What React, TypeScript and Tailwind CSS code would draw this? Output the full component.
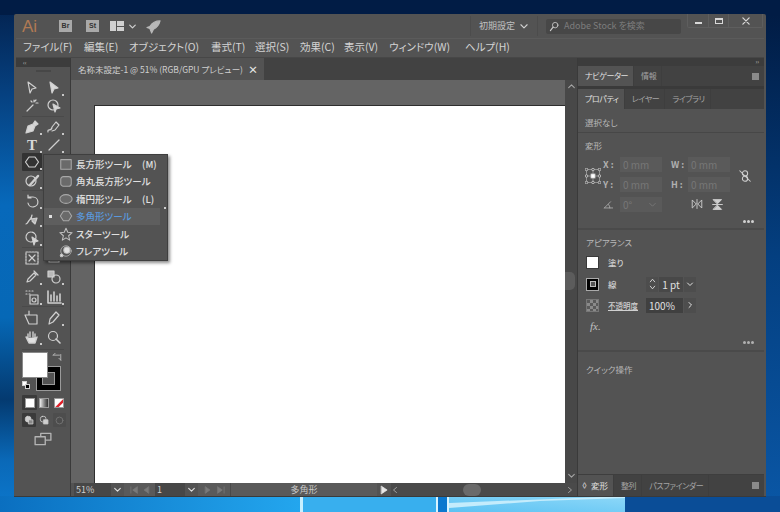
import type { ReactNode } from "react";

const menus = [
  ["ファイル(F)", "w-[61px]"],
  ["編集(E)", "w-[45px]"],
  ["オブジェクト(O)", "w-[82px]"],
  ["書式(T)", "w-[44px]"],
  ["選択(S)", "w-[45px]"],
  ["効果(C)", "w-[44px]"],
  ["表示(V)", "w-[45px]"],
  ["ウィンドウ(W)", "w-[76px]"],
  ["ヘルプ(H)", "w-[60px]"],
] as const;

function Ic({ children, size = 16, stroke = "#cfcfcf" }: { children: ReactNode; size?: number; stroke?: string }) {
  return (
    <svg width={size} height={size} viewBox="0 0 16 16" fill="none" stroke={stroke} strokeWidth="1.2" strokeLinejoin="round" strokeLinecap="round">
      {children}
    </svg>
  );
}

function Wallpaper() {
  return (
    <svg className="absolute inset-0" width="780" height="512" viewBox="0 0 780 512" preserveAspectRatio="none">
      <defs>
        <linearGradient id="left" x1="0" y1="0" x2="0" y2="1">
          <stop offset="0" stopColor="#03214d" />
          <stop offset="0.18" stopColor="#06407f" />
          <stop offset="0.4" stopColor="#0769bb" />
          <stop offset="0.62" stopColor="#0668b6" />
          <stop offset="0.78" stopColor="#043a70" />
          <stop offset="0.9" stopColor="#0a69b8" />
          <stop offset="1" stopColor="#0c78cd" />
        </linearGradient>
        <linearGradient id="right" x1="0" y1="0" x2="0" y2="1">
          <stop offset="0" stopColor="#011a41" />
          <stop offset="0.5" stopColor="#043f80" />
          <stop offset="1" stopColor="#0a57a6" />
        </linearGradient>
        <linearGradient id="bottom" x1="0" y1="0" x2="1" y2="0">
          <stop offset="0" stopColor="#0a6fc0" />
          <stop offset="1" stopColor="#23a6ee" />
        </linearGradient>
        <linearGradient id="pane" x1="0" y1="1" x2="1" y2="0">
          <stop offset="0" stopColor="#5cc2f3" />
          <stop offset="1" stopColor="#8ed8f8" />
        </linearGradient>
      </defs>
      <rect width="16" height="512" fill="url(#left)" />
      <rect x="764" width="16" height="512" fill="url(#right)" />
      <rect width="780" height="15" fill="#011c45" />
      <rect y="496" width="300" height="16" fill="url(#bottom)" />
      <rect x="300" y="496" width="137" height="16" fill="#38afee" />
      <rect x="438" y="496" width="10" height="16" fill="#0b78cf" />
      <rect x="449" y="496" width="176" height="16" fill="url(#pane)" />
      <rect x="625" y="496" width="155" height="16" fill="#0a4d97" />
      <rect x="300" y="496" width="3" height="16" fill="#c8f0ff" />
      <rect x="436" y="496" width="2" height="16" fill="#d8f4ff" />
      <rect x="447" y="496" width="2" height="16" fill="#d8f4ff" />
      <path d="M449 508 L540 501 L625 498 L625 496 L449 503 Z" fill="#c4ecfc" />
    </svg>
  );
}

function Tool({ children, active, corner = true }: { children: ReactNode; active?: boolean; corner?: boolean }) {
  return (
    <div className={`relative flex h-[18px] w-[20px] items-center justify-center rounded-[1px] ${active ? "bg-[#333333]" : ""}`}>
      {children}
      {corner && <span className="absolute right-[0px] bottom-[1px] h-[2px] w-[2px] bg-[#c8c8c8]" />}
    </div>
  );
}

function ToolRow({ children, className = "" }: { children: ReactNode; className?: string }) {
  return <div className={`flex justify-center gap-[2px] ${className}`}>{children}</div>;
}

function ToolSep() {
  return <div className="mx-[6px] h-px bg-[#4a4a4a]" />;
}

function ToolPanel() {
  return (
    <div className="flex w-[54px] shrink-0 flex-col bg-[#535353]">
      <div className="flex h-[9px] items-center bg-[#3c3c3c] pl-[7px] text-[6px] leading-none text-[#bbbbbb]">‹‹</div>
      <div className="mx-auto mt-[3px] h-[2px] w-[15px] bg-[#474747]" />
      <div className="mt-[7px] flex flex-col">
        <ToolRow>
          <Tool corner={false}><Ic><path d="M4 2 L12 8 L8 9 L6 13 Z" /></Ic></Tool>
          <Tool><Ic><path d="M4 2 L12 8 L8 9 L6 13 Z" fill="#d8d8d8" /></Ic></Tool>
        </ToolRow>
        <ToolRow className="mb-[1px]">
          <Tool corner={false}><Ic><path d="M3 13 L9 7 M10 2 V4 M12 5 H14 M7 3 L8 4 M12 2 L11 3" /></Ic></Tool>
          <Tool corner={false}><Ic><circle cx="7" cy="7" r="5" /><path d="M7 6 L14 10 L10 11 L9 14 Z" fill="#d8d8d8" /></Ic></Tool>
        </ToolRow>
        <ToolSep />
        <ToolRow className="mt-[1px]">
          <Tool><Ic><path d="M2 14 L4 7 L9 5 L11 7 L9 12 Z M9 5 L11 2 L14 5 L11 7" fill="#d8d8d8" /></Ic></Tool>
          <Tool><Ic><path d="M2 13 C1 9 6 13 6 8 L10 3 L13 6 L9 11 L6 12" /></Ic></Tool>
        </ToolRow>
        <ToolRow className="-mb-[1px]">
          <Tool><span className="font-['Liberation_Serif',serif] text-[15px] leading-none font-bold text-[#d8d8d8]">T</span></Tool>
          <Tool><Ic><path d="M3 13 L13 3" /></Ic></Tool>
        </ToolRow>
        <ToolRow className="mb-[1px]">
          <Tool active><Ic><path d="M5 3 H11 L14.5 8 L11 13 H5 L1.5 8 Z" /></Ic></Tool>
          <Tool><span /></Tool>
        </ToolRow>
        <ToolRow>
          <Tool><Ic><circle cx="7" cy="8" r="5" /><path d="M6 12 L14 3" strokeWidth="2.4" /></Ic></Tool>
          <Tool corner={false}><span /></Tool>
        </ToolRow>
        <ToolSep />
        <ToolRow className="mt-[1px]">
          <Tool><Ic><path d="M4 4 H9 A5 5 0 1 1 4 10 M4 2 V5 H7" /></Ic></Tool>
          <Tool><span /></Tool>
        </ToolRow>
        <ToolRow>
          <Tool><Ic><path d="M2 13 C5 12 4 9 7 8 L8 4 M7 8 L13 7 L11 13 L8 10" fill="#b8b8b8" /></Ic></Tool>
          <Tool><span /></Tool>
        </ToolRow>
        <ToolRow className="mt-[1px]">
          <Tool><Ic><circle cx="7" cy="7" r="5" strokeDasharray="3 1" /><path d="M8 7 L14 11 L11 12 L10 15 Z" fill="#d8d8d8" /></Ic></Tool>
          <Tool><span /></Tool>
        </ToolRow>
        <ToolSep />
        <ToolRow className="mt-[1px]">
          <Tool corner={false}><Ic><rect x="2" y="2" width="12" height="12" strokeDasharray="2 1" /><path d="M5 5 L8 8 L5 11 M11 5 L8 8 L11 11" /></Ic></Tool>
          <Tool corner={false}><Ic><rect x="3" y="4" width="10" height="8" /></Ic></Tool>
        </ToolRow>
        <ToolRow className="mt-[1px]">
          <Tool><Ic><path d="M3 13 L4 10 L10 4 L12 6 L6 12 Z M10 2 L14 6" /></Ic></Tool>
          <Tool><Ic><rect x="2" y="2" width="6" height="6" fill="#b8b8b8" /><circle cx="10" cy="10" r="4" /></Ic></Tool>
        </ToolRow>
        <ToolRow className="mt-[2px]">
          <Tool><Ic><path d="M2 2 H3 M5 2 H6 M2 5 H3 M8 2 H9 M5 5 H6" /><rect x="6" y="6" width="8" height="9" /><circle cx="10" cy="11" r="2" /></Ic></Tool>
          <Tool><Ic><path d="M2 2 V14 H15 M5 12 V6 M8 12 V3 M11 12 V7 M14 12 V5" strokeWidth="1.6" /></Ic></Tool>
        </ToolRow>
        <ToolSep />
        <ToolRow className="mt-[2px]">
          <Tool corner={false}><Ic><path d="M5 1 V5 M1 5 H13 V14 H5 Z" /></Ic></Tool>
          <Tool><Ic><path d="M3 14 L4 9 L10 2 L13 5 L7 12 Z" /></Ic></Tool>
        </ToolRow>
        <ToolRow className="mt-[1px]">
          <Tool><Ic><path d="M4 9 V5 M6 8 V3 M9 8 V3 M11 9 V5 M4 9 L2 8 L5 14 H11 L13 8" fill="#e0e0e0" strokeWidth="1.4" /></Ic></Tool>
          <Tool corner={false}><Ic><circle cx="7" cy="7" r="4.5" /><path d="M10 10 L14 14" strokeWidth="1.6" /></Ic></Tool>
        </ToolRow>
      </div>
      <div className="relative mx-[6px] mt-[3px] h-[46px] border-t border-[#4a4a4a]">
        <div className="absolute top-[16px] left-[14px] flex h-[25px] w-[25px] items-center justify-center border border-[#9a9a9a] bg-black">
          <div className="h-[13px] w-[13px] border border-[#9a9a9a] bg-[#535353]" />
        </div>
        <div className="absolute top-[2px] left-0 h-[26px] w-[26px] border border-[#8a8a8a] bg-white" />
        <div className="absolute top-[2px] left-[30px]">
          <Ic size={10}><path d="M2 5 L5 2 M2 5 H12 M14 13 V4 M14 13 L11 10" /></Ic>
        </div>
        <div className="absolute top-[31px] left-0 h-[5px] w-[5px] border border-[#cfcfcf] bg-white" />
        <div className="absolute top-[34px] left-[3px] h-[5px] w-[5px] border border-[#cfcfcf] bg-black" />
      </div>
      <div className="flex items-center pl-[6px]">
        <div className="flex h-[15px] w-[15px] items-center justify-center rounded-[1px] bg-[#3a3a3a]">
          <div className="h-[10px] w-[10px] border border-[#9a9a9a] bg-white" />
        </div>
        <div className="ml-[2px] h-[10px] w-[10px] border border-[#9a9a9a] bg-gradient-to-r from-[#eeeeee] to-[#333333]" />
        <div className="ml-[5px] h-[10px] w-[10px] overflow-hidden border border-[#9a9a9a] bg-white">
          <svg width="10" height="10" viewBox="0 0 10 10"><path d="M0 10 L10 0" stroke="#e0202a" strokeWidth="2.4" /></svg>
        </div>
      </div>
      <div className="mt-[3px] flex items-center gap-[2px] pl-[6px]">
        <div className="flex h-[14px] w-[14px] items-center justify-center rounded-[1px] bg-[#3a3a3a]"><Ic size={11}><rect x="2" y="2" width="8" height="8" rx="3" fill="#cfcfcf" /><rect x="7" y="7" width="6" height="6" fill="#888888" /></Ic></div>
        <div className="flex h-[14px] w-[13px] items-center justify-center"><Ic size={11}><rect x="2" y="2" width="8" height="8" rx="3" /><rect x="7" y="7" width="6" height="6" fill="#cfcfcf" /></Ic></div>
        <div className="flex h-[14px] w-[13px] items-center justify-center rounded-[1px] bg-[#4d4d4d]"><Ic size={11} stroke="#777777"><circle cx="8" cy="8" r="5" /></Ic></div>
      </div>
      <div className="mt-[3px] flex justify-center">
        <Ic size={18} stroke="#b4b4b4"><rect x="6" y="3" width="9" height="6" /><rect x="1" y="6" width="9" height="7" fill="#535353" /></Ic>
      </div>
    </div>
  );
}

function FlyoutRow({ icon, label, shortcut, active }: { icon: ReactNode; label: string; shortcut?: string; active?: boolean }) {
  return (
    <div className={`relative flex h-[17.5px] items-center pl-[13px] ${active ? "bg-[#5e5e5e] text-[#5a98dc]" : "text-[#e0e0e0]"}`}>
      {active && <span className="absolute left-[5px] h-[3px] w-[3px] bg-[#e0e0e0]" />}
      <span className="flex w-[18px] justify-center">{icon}</span>
      <span className="ml-[1px] w-[66px] font-medium whitespace-nowrap">{label}</span>
      {shortcut && <span className="font-medium whitespace-nowrap">{shortcut}</span>}
    </div>
  );
}

function Flyout() {
  return (
    <div className="absolute top-[96px] left-[27px] z-10 w-[125px] border border-[#3f3f3f] bg-[#535353] pr-[7px] text-[9.5px] shadow-[2px_2px_3px_rgba(0,0,0,0.45)]">
      <FlyoutRow label="長方形ツール" shortcut="(M)" icon={<Ic size={14} stroke="#a8a8a8"><rect x="2" y="3" width="12" height="11" fill="#6a6a6a" /></Ic>} />
      <FlyoutRow label="角丸長方形ツール" icon={<Ic size={14} stroke="#a8a8a8"><rect x="2" y="3" width="12" height="11" rx="3" fill="#6a6a6a" /></Ic>} />
      <FlyoutRow label="楕円形ツール" shortcut="(L)" icon={<Ic size={14} stroke="#a8a8a8"><ellipse cx="8" cy="8" rx="7" ry="5" fill="#6a6a6a" /></Ic>} />
      <FlyoutRow active label="多角形ツール" icon={<Ic size={14} stroke="#a8a8a8"><path d="M5 2.5 H11 L14.5 8 L11 13.5 H5 L1.5 8 Z" fill="#6a6a6a" /></Ic>} />
      <FlyoutRow label="スターツール" icon={<Ic size={14} stroke="#c0c0c0"><path d="M8 1.5 L10 6 L15 6.5 L11 10 L12.2 15 L8 12.4 L3.8 15 L5 10 L1 6.5 L6 6 Z" /></Ic>} />
      <FlyoutRow label="フレアツール" icon={<Ic size={14} stroke="#c0c0c0"><circle cx="9" cy="7" r="3.5" fill="#e0e0e0" /><circle cx="8" cy="8" r="6" strokeWidth="0.8" /><circle cx="3" cy="13" r="1.5" fill="#e0e0e0" /></Ic>} />
      <span className="absolute top-[52px] right-[1px] h-[2px] w-[2px] bg-[#cfcfcf]" />
    </div>
  );
}

function DocArea() {
  return (
    <div className="ml-px flex min-w-0 flex-1 flex-col">
      <div className="flex h-[22px] shrink-0 bg-[#424242]">
        <div className="flex w-[193px] items-center bg-[#535353] pl-[7px] text-[8.5px] whitespace-nowrap text-[#cfcfcf]">
          <span>名称未設定-1 @ 51% (RGB/GPU プレビュー)</span>
          <span className="ml-auto pr-[6px] text-[10px] font-bold text-[#e8e8e8]">×</span>
        </div>
      </div>
      <div className="flex min-h-0 flex-1">
        <div className="min-w-0 flex-1 bg-[#646464] pt-[25px] pl-[23px]">
          <div className="h-[378px] w-full border-t border-l border-[#2e2e2e] bg-white" />
        </div>
        <div className="relative flex w-[12px] shrink-0 flex-col items-center bg-[#484848] pt-[2px] text-[#9a9a9a]">
          <Ic size={9} stroke="#a8a8a8"><path d="M3 10 L8 5 L13 10" strokeWidth="1.8" /></Ic>
          <div className="mt-[181px] h-[18px] w-[10px] -translate-x-[1px] rounded-r-[5px] bg-[#5c5c5c]" />
          <div className="mt-auto mb-[3px]"><Ic size={9} stroke="#a8a8a8"><path d="M3 6 L8 11 L13 6" strokeWidth="1.8" /></Ic></div>
        </div>
      </div>
      <StatusBar />
    </div>
  );
}

function NavGlyph({ d }: { d: string }) {
  return <Ic size={10} stroke="#7a7a7a"><path d={d} fill="#7a7a7a" /></Ic>;
}

function StatusBar() {
  return (
    <div className="flex h-[13px] shrink-0 items-stretch bg-[#535353] text-[9px] leading-[13px] text-[#cfcfcf]">
      <div className="ml-[3px] w-[37px] bg-[#474747] pl-[2px]">51%</div>
      <div className="flex w-[13px] items-center justify-center"><Ic size={9} stroke="#e0e0e0"><path d="M3 6 L8 11 L13 6" strokeWidth="2" /></Ic></div>
      <div className="flex w-[31px] items-center justify-center gap-[2px] bg-[#5a5a5a]">
        <NavGlyph d="M3 3 V13 M13 3 L6 8 L13 13 Z" /><NavGlyph d="M12 3 L5 8 L12 13 Z" />
      </div>
      <div className="w-[30px] bg-[#474747] pl-[2px]">1</div>
      <div className="flex w-[13px] items-center justify-center"><Ic size={9} stroke="#e0e0e0"><path d="M3 6 L8 11 L13 6" strokeWidth="2" /></Ic></div>
      <div className="flex w-[32px] items-center justify-center gap-[3px] bg-[#5a5a5a]">
        <NavGlyph d="M4 3 L11 8 L4 13 Z" /><NavGlyph d="M13 3 V13 M3 3 L10 8 L3 13 Z" />
      </div>
      <div className="w-[147px] border-l border-[#4a4a4a] bg-[#5a5a5a] text-center text-[#c8c8c8]">多角形</div>
      <div className="flex w-[14px] items-center justify-center"><Ic size={10} stroke="#e8e8e8"><path d="M4 2 L13 8 L4 14 Z" fill="#e8e8e8" /></Ic></div>
      <div className="flex min-w-0 flex-1 items-center bg-[#4a4a4a]">
        <Ic size={8} stroke="#a8a8a8"><path d="M11 3 L5 8 L11 13" strokeWidth="1.8" /></Ic>
        <div className="ml-[64px] h-[12px] w-[18px] rounded-[6px] bg-[#6a6a6a]" />
        <div className="mr-[3px] ml-auto"><Ic size={8} stroke="#a8a8a8"><path d="M5 3 L11 8 L5 13" strokeWidth="1.8" /></Ic></div>
      </div>
    </div>
  );
}

function Tab({ label, active }: { label: string; active?: boolean }) {
  return (
    <div className={`flex h-full items-center border-r border-[#3e3e3e] pr-[5px] pl-[7px] text-[8px] tracking-[-0.4px] whitespace-nowrap ${active ? "bg-[#535353] text-[#e0e0e0]" : "text-[#a4a4a4]"}`}>
      {label}
    </div>
  );
}

function PanelMenu() {
  return <span className="mr-[5px] ml-auto h-[7px] w-[7px] bg-[#8a8a8a]" />;
}

function Field({ label, value, w = "w-[42px]" }: { label: ReactNode; value: string; w?: string }) {
  return (
    <div className="flex items-center">
      <span className="w-[17px] text-[9px] font-bold text-[#b0b0b0]">{label}</span>
      <span className={`flex h-[15px] ${w} items-center bg-[#5a5a5a] pl-[3px] text-[10px] text-[#777777]`}>{value}</span>
    </div>
  );
}

function RightPanel() {
  const refPoints = [1.5, 8, 14.5];
  return (
    <div className="ml-px flex w-[186px] shrink-0 flex-col">
      <div className="flex h-[8px] shrink-0 items-center justify-end bg-[#3c3c3c] pr-[5px] text-[6px] leading-none text-[#bbbbbb]">››</div>
      <div className="flex h-[20px] shrink-0 items-center bg-[#424242]">
        <Tab active label="ナビゲーター" />
        <Tab label="情報" />
        <PanelMenu />
      </div>
      <div className="h-[3px] shrink-0 bg-[#3a3a3a]" />
      <div className="flex h-[20px] shrink-0 items-center bg-[#424242]">
        <Tab active label="プロパティ" />
        <Tab label="レイヤー" />
        <Tab label="ライブラリ" />
      </div>
      <div className="min-h-0 flex-1 bg-[#535353] text-[8.5px] text-[#b8b8b8]">
        <div className="h-[24px] border-b border-[#474747] pt-[7px] pl-[7px]">選択なし</div>
        <div className="relative h-[97px] border-b-2 border-[#4a4a4a] pt-[6px] pl-[7px]">
          <div>変形</div>
          <div className="mt-[5px] flex">
            <div className="mt-[11px] mr-[2px] w-[16px]">
              <svg width="16" height="16" viewBox="0 0 16 16" fill="none" stroke="#cfcfcf" strokeWidth="0.8">
                <path d="M1.5 1.5 H14.5 V14.5 H1.5 Z M8 1.5 V14.5 M1.5 8 H14.5" strokeWidth="0.5" />
                {refPoints.map((y) =>
                  refPoints.map((x) => <circle key={`${x}-${y}`} cx={x} cy={y} r="1.3" fill="#535353" />)
                )}
                <rect x="6" y="6" width="4" height="4" fill="#ffffff" />
              </svg>
            </div>
            <div className="flex w-[128px] flex-col gap-[5px]">
              <div className="flex gap-[9px]"><Field label="X :" value="0 mm" /><Field label="W :" value="0 mm" /></div>
              <div className="flex gap-[9px]"><Field label="Y :" value="0 mm" /><Field label="H :" value="0 mm" /></div>
              <div className="flex items-center">
                <Field label={<Ic size={11} stroke="#b0b0b0"><path d="M2 13 H14 M2 13 L11 4 M8 8 A6 6 0 0 1 10 13" /></Ic>} value="0°" />
                <span className="mr-[34px] -ml-[14px]"><Ic size={9} stroke="#777777"><path d="M3 6 L8 11 L13 6" strokeWidth="1.6" /></Ic></span>
                <Ic size={12}><path d="M2 3 L7 8 L2 13 Z M14 3 L9 8 L14 13 Z" /><path d="M8 2 V14" /></Ic>
                <span className="ml-[8px]"><Ic size={13}><path d="M3 2 H13 L8 7 Z M3 14 H13 L8 9 Z" fill="#cfcfcf" /><path d="M2 8 H14" /></Ic></span>
              </div>
            </div>
            <div className="mt-[12px] ml-[7px]"><Ic size={14}><rect x="5" y="2" width="6" height="6" rx="3" /><rect x="5" y="8" width="6" height="6" rx="3" /><path d="M2 2 L14 14" /></Ic></div>
          </div>
          <div className="absolute right-[10px] bottom-[5px] flex gap-[1px]">
            <span className="h-[3px] w-[3px] rounded-full bg-[#d0d0d0]" /><span className="h-[3px] w-[3px] rounded-full bg-[#d0d0d0]" /><span className="h-[3px] w-[3px] rounded-full bg-[#d0d0d0]" />
          </div>
        </div>
        <div className="relative h-[122px] border-b-2 border-[#4a4a4a] pt-[6px] pl-[8px]">
          <div className="text-[#b8b8b8]">アピアランス</div>
          <div className="mt-[7px] flex h-[13px] items-center">
            <span className="h-[13px] w-[13px] border border-[#3a3a3a] bg-white" />
            <span className="ml-[9px] font-medium text-[#d0d0d0]">塗り</span>
          </div>
          <div className="mt-[9px] flex h-[13px] items-center">
            <span className="flex h-[13px] w-[13px] items-center justify-center border border-[#aaaaaa] bg-black"><span className="h-[6px] w-[6px] border border-[#bbbbbb] bg-[#535353]" /></span>
            <span className="ml-[9px] w-[38px] font-medium text-[#d0d0d0]">線</span>
            <span className="flex h-[15px] w-[12px] flex-col items-center justify-center bg-[#4d4d4d]">
              <Ic size={7} stroke="#e0e0e0"><path d="M3 11 L8 5 L13 11" strokeWidth="2" /></Ic>
              <Ic size={7} stroke="#e0e0e0"><path d="M3 5 L8 11 L13 5" strokeWidth="2" /></Ic>
            </span>
            <span className="ml-px flex h-[15px] w-[24px] items-center justify-center bg-[#484848] text-[10px] text-[#e0e0e0]">1 pt</span>
            <span className="ml-px flex h-[15px] w-[12px] items-center justify-center bg-[#4d4d4d]"><Ic size={8} stroke="#e0e0e0"><path d="M3 6 L8 11 L13 6" strokeWidth="2" /></Ic></span>
          </div>
          <div className="mt-[8px] flex h-[13px] items-center">
            <span className="h-[13px] w-[13px] border border-[#777777] bg-[conic-gradient(#8a8a8a_25%,#5a5a5a_0_50%,#8a8a8a_0_75%,#5a5a5a_0)] bg-[length:6px_6px]" />
            <span className="ml-[9px] w-[38px] text-[7.5px] font-medium whitespace-nowrap text-[#d0d0d0] underline underline-offset-1">不透明度</span>
            <span className="flex h-[15px] w-[37px] items-center bg-[#404040] pl-[3px] text-[10px] text-[#e0e0e0]">100%</span>
            <span className="ml-px flex h-[15px] w-[12px] items-center justify-center bg-[#4d4d4d]"><Ic size={8} stroke="#e0e0e0"><path d="M6 3 L11 8 L6 13" strokeWidth="2" /></Ic></span>
          </div>
          <div className="mt-[6px] pl-[4px] font-['Liberation_Serif',serif] text-[11px] text-[#c0c0c0] italic">fx.</div>
          <div className="absolute right-[10px] bottom-[6px] flex gap-[1px]">
            <span className="h-[3px] w-[3px] rounded-full bg-[#b0b0b0]" /><span className="h-[3px] w-[3px] rounded-full bg-[#b0b0b0]" /><span className="h-[3px] w-[3px] rounded-full bg-[#b0b0b0]" />
          </div>
        </div>
        <div className="pt-[11px] pl-[8px]">クイック操作</div>
      </div>
      <div className="flex h-[22px] shrink-0 items-center border-t border-[#3e3e3e] bg-[#424242]">
        <div className="flex h-full items-center border-r border-[#3e3e3e] bg-[#535353] pr-[5px] pl-[3px] text-[8.5px] whitespace-nowrap text-[#e0e0e0]">
          <span className="mr-[3px] text-[7px]">◊</span>変形
        </div>
        <Tab label="整列" />
        <Tab label="パスファインダー" />
        <PanelMenu />
      </div>
    </div>
  );
}

export default function App() {
  return (
    <div className="relative h-[512px] w-[780px] overflow-hidden font-['Noto_Sans_CJK_JP','Noto_Sans',sans-serif] [font-feature-settings:'palt']">
      <Wallpaper />
      <div className="relative mt-[14px] ml-[14px] inline-flex h-[483px] w-[752px] flex-col rounded-t-[2px] border-b border-[#3a3a3a] bg-[#535353] px-[2px] align-top">
        <div className="flex h-[24px] shrink-0 items-center">
          <span className="ml-[6px] w-[37px] font-['Liberation_Sans',sans-serif] text-[17px] leading-none text-[#b07a54]">Ai</span>
          <span className="flex h-[12px] w-[13px] items-center justify-center bg-[#a9a9a9] font-['Liberation_Sans',sans-serif] text-[7px] font-bold text-[#333333]">Br</span>
          <span className="ml-[14px] flex h-[12px] w-[13px] items-center justify-center bg-[#a9a9a9] font-['Liberation_Sans',sans-serif] text-[7px] font-bold text-[#333333]">St</span>
          <span className="ml-[11px] flex gap-px">
            <span className="h-[10px] w-[6px] bg-[#d0d0d0]" />
            <span className="flex flex-col gap-px"><span className="h-[4.5px] w-[7px] bg-[#d0d0d0]" /><span className="h-[4.5px] w-[7px] bg-[#d0d0d0]" /></span>
          </span>
          <span className="ml-[3px]"><Ic size={11} stroke="#d0d0d0"><path d="M4 6 L8 10 L12 6" strokeWidth="1.8" /></Ic></span>
          <span className="ml-[8px]"><Ic size={15} stroke="#b8b8b8"><path d="M15 2 C10 2 6 5 4 8 L1 9 L4 10 L6 15 L8 11 C12 9 14 6 15 2 Z" fill="#b8b8b8" /></Ic></span>
          <div className="ml-[309px] flex h-[20px] items-center border-x border-[#4c4c4c] pr-[8px] pl-[8px] text-[9px] whitespace-nowrap text-[#c0c0c0]">
            初期設定
            <span className="ml-[4px]"><Ic size={10} stroke="#d0d0d0"><path d="M3 6 L8 11 L13 6" strokeWidth="1.8" /></Ic></span>
          </div>
          <div className="ml-[8px] flex h-[15px] w-[135px] items-center rounded-[2px] bg-[#474747] pl-[3px] text-[9px] text-[#7d7d7d]">
            <Ic size={11} stroke="#d0d0d0"><circle cx="9" cy="6" r="4" /><path d="M6 9 L2 14" strokeWidth="1.6" /></Ic>
            <span className="ml-[4px] whitespace-nowrap">Adobe Stock を検索</span>
          </div>
          <div className="mb-[10px] ml-[6px] flex h-[14px] w-[76px] items-center rounded-b-[2px] border-x border-b border-[#5e5e5e] text-[#d8d8d8]">
            <span className="flex h-full w-[21px] items-end justify-center border-r border-[#5e5e5e] pb-[3px]"><span className="h-[2px] w-[7px] bg-[#d8d8d8]" /></span>
            <span className="flex h-full w-[20px] items-center justify-center border-r border-[#5e5e5e]"><span className="h-[6px] w-[8px] border border-t-2 border-[#d8d8d8]" /></span>
            <span className="flex flex-1 items-center justify-center"><Ic size={10} stroke="#d8d8d8"><path d="M3 3 L13 13 M13 3 L3 13" strokeWidth="2" /></Ic></span>
          </div>
        </div>
        <div className="flex h-[19px] shrink-0 items-center border-t border-[#5b5b5b] pb-[3px] pl-[7px] text-[10.5px] text-[#d4d4d4]">
          {menus.map(([label, w]) => (
            <span key={label} className={`${w} whitespace-nowrap`}>{label}</span>
          ))}
        </div>
        <div className="relative flex min-h-0 flex-1 border-t border-[#474747] bg-[#3a3a3a]">
          <ToolPanel />
          <DocArea />
          <RightPanel />
          <Flyout />
        </div>
      </div>
    </div>
  );
}
